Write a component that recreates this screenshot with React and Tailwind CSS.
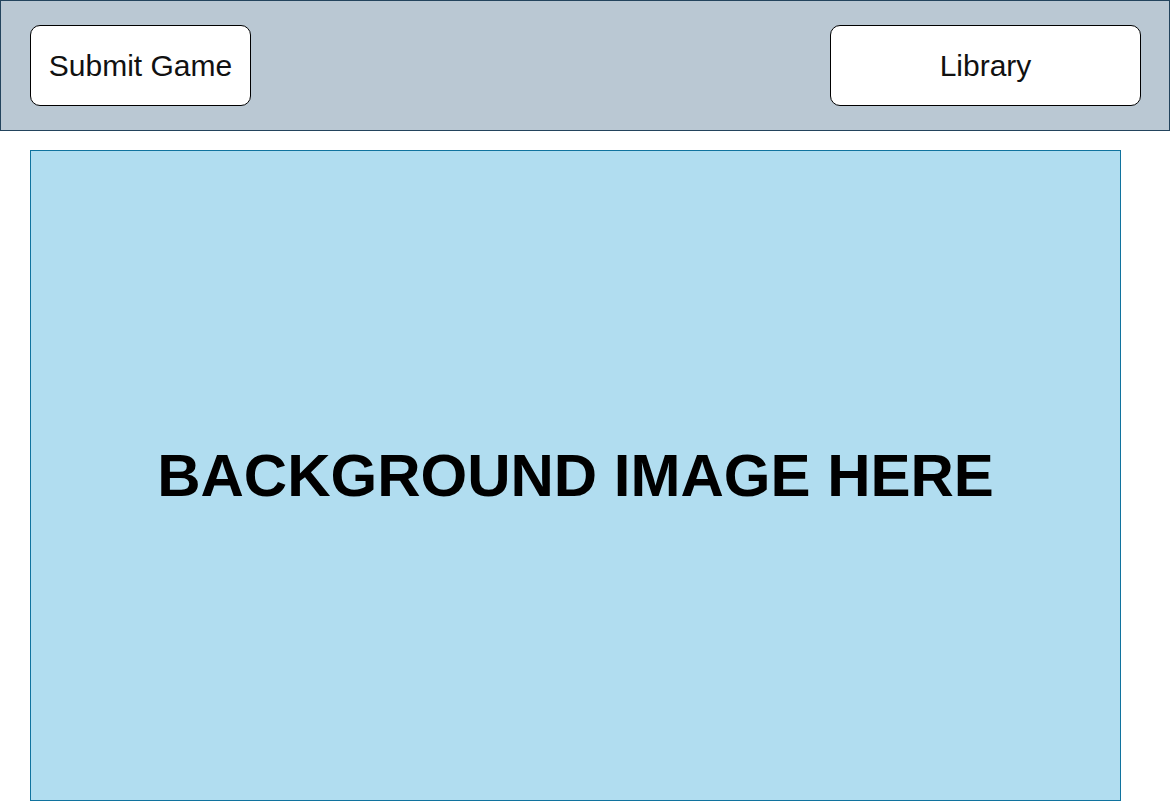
export default function App() {
  return (
    <div className="w-[1171px] h-[801px] bg-white overflow-hidden" style={{ fontFamily: '"Liberation Sans", Arial, sans-serif' }}>
      {/* Top bar */}
      <div className="w-[1170px] h-[131px] bg-[#bac8d3] border border-[#23445d] flex items-start justify-between pl-[29px] pr-[28px] pt-[24px]">
        <button className="w-[221px] h-[81px] bg-white border border-black rounded-[10px] text-[30px] text-[#111] flex items-center justify-center">
          Submit Game
        </button>
        <button className="w-[311px] h-[81px] bg-white border border-black rounded-[10px] text-[30px] text-[#111] flex items-center justify-center">
          Library
        </button>
      </div>

      {/* Hero */}
      <div className="mt-[19px] ml-[30px] w-[1091px] h-[651px] bg-[#b1ddf0] border border-[#10739e] flex items-center justify-center">
        <span className="text-[60px] font-bold text-black">BACKGROUND IMAGE HERE</span>
      </div>
    </div>
  );
}
